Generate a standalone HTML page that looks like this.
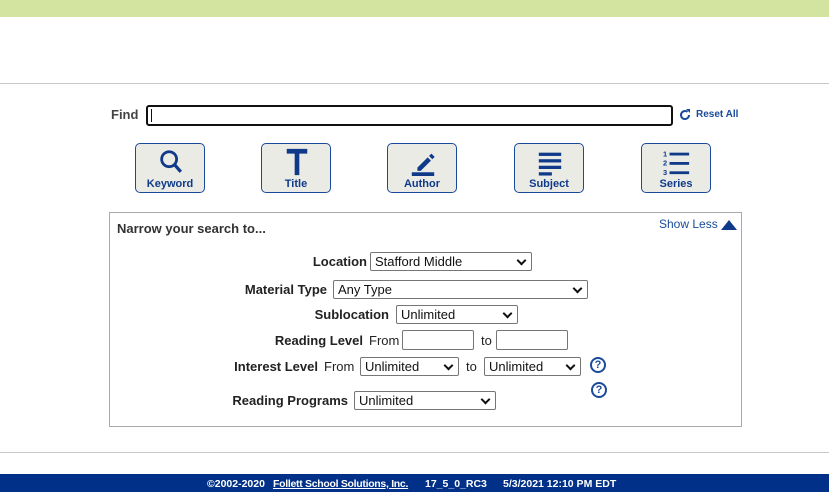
<!DOCTYPE html>
<html><head><meta charset="utf-8"><style>
*{margin:0;padding:0;box-sizing:border-box}
body{width:829px;height:497px;position:relative;background:#fff;font-family:"Liberation Sans",Arial,sans-serif;overflow:hidden;color:#222}
.a{position:absolute}
.btn{position:absolute;top:143px;width:70px;height:50px;background:#ebebe6;border:1px solid #1a4a9a;border-radius:5px;color:#0f3a8a;font-weight:bold;font-size:11px;text-align:center}
.btn span{position:absolute;left:0;right:0;top:34px;line-height:12px}
.btn svg{position:absolute;left:21px;top:4px}
.lab{position:absolute;font-size:13px;font-weight:bold;text-align:right;color:#222}
.sel{position:absolute;height:19px;border:1px solid #767676;border-radius:2px;background:#fff;font-size:13px;padding-left:4px;line-height:17px;color:#111}
.sel:after{content:"";position:absolute;right:6px;top:4px;width:5px;height:5px;border-right:2px solid #111;border-bottom:2px solid #111;transform:rotate(45deg)}
.inp{position:absolute;height:20px;border:1px solid #767676;border-radius:2px;background:#fff}
.t{position:absolute;font-size:13px;color:#222}
.q{position:absolute;width:16px;height:16px;border:2px solid #1a4a9a;border-radius:50%;color:#1a4a9a;font-size:11px;font-weight:bold;text-align:center;line-height:12px}
</style></head><body>
<div class="a" style="left:0;top:0;width:829px;height:17px;background:#d3e4a0"></div>
<div class="a" style="left:0;top:83px;width:829px;height:1px;background:#c8c8c8"></div>

<div class="a" style="left:111px;top:107px;font-size:13px;font-weight:bold;color:#444">Find</div>
<div class="a" style="left:146px;top:105px;width:527px;height:21px;border:2px solid #111;border-radius:3px"></div>
<div class="a" style="left:151px;top:109px;width:1px;height:13px;background:#111"></div>
<svg class="a" style="left:678px;top:108px" width="14" height="14" viewBox="0 0 14 14"><path d="M11 7a4 4 0 1 1-1.5-3.1" fill="none" stroke="#1a4a9a" stroke-width="2"/><path d="M8 1h4v4z" fill="#1a4a9a"/></svg>
<div class="a" style="left:696px;top:109px;font-size:10px;font-weight:bold;color:#1a4a9a">Reset All</div>

<div class="btn" style="left:135px"><svg width="28" height="28" viewBox="0 0 30 30"><circle cx="13" cy="12" r="8" fill="none" stroke="#0f3a8a" stroke-width="3"/><path d="M18.5 17.5l7 8" stroke="#0f3a8a" stroke-width="3.5"/></svg><span>Keyword</span></div>
<div class="btn" style="left:261px"><svg width="28" height="28" viewBox="0 0 30 30"><path d="M4 1h22v5H4zM12.5 1h5v28h-5z" fill="#0f3a8a"/></svg><span>Title</span></div>
<div class="btn" style="left:387px"><svg width="28" height="28" viewBox="0 0 30 30"><path d="M9 21l11-11 3.5 3.5-11 11H9z" fill="#0f3a8a"/><path d="M21.5 8.5l2.5-2.5 3.5 3.5-2.5 2.5z" fill="#0f3a8a"/><rect x="3" y="26" width="24" height="4" fill="#0f3a8a"/></svg><span>Author</span></div>
<div class="btn" style="left:514px"><svg width="28" height="28" viewBox="0 0 30 30"><rect x="3" y="5" width="24" height="3.5" fill="#0f3a8a"/><rect x="3" y="12" width="24" height="3.5" fill="#0f3a8a"/><rect x="3" y="19" width="24" height="3.5" fill="#0f3a8a"/><rect x="3" y="26" width="14" height="3.5" fill="#0f3a8a"/></svg><span>Subject</span></div>
<div class="btn" style="left:641px"><svg width="28" height="28" viewBox="0 0 30 30"><text x="0" y="9" font-size="8" font-weight="bold" fill="#0f3a8a" font-family="Liberation Sans">1</text><text x="0" y="19" font-size="8" font-weight="bold" fill="#0f3a8a" font-family="Liberation Sans">2</text><text x="0" y="29" font-size="8" font-weight="bold" fill="#0f3a8a" font-family="Liberation Sans">3</text><rect x="7" y="5" width="21" height="3" fill="#0f3a8a"/><rect x="7" y="15" width="21" height="3" fill="#0f3a8a"/><rect x="7" y="25" width="21" height="3" fill="#0f3a8a"/></svg><span>Series</span></div>

<div class="a" style="left:109px;top:212px;width:633px;height:215px;border:1px solid #aaa"></div>
<div class="a" style="left:117px;top:221px;font-size:13px;font-weight:bold;color:#333">Narrow your search to...</div>
<div class="a" style="left:659px;top:217px;font-size:12px;color:#1a4a9a">Show Less</div>
<svg class="a" style="left:721px;top:219px" width="16" height="11"><path d="M0 11L8 1l8 10z" fill="#0f3a8a"/></svg>

<div class="lab" style="right:462px;top:254px">Location</div>
<div class="sel" style="left:370px;top:252px;width:162px">Stafford Middle</div>
<div class="lab" style="right:502px;top:282px">Material Type</div>
<div class="sel" style="left:333px;top:280px;width:255px">Any Type</div>
<div class="lab" style="right:440px;top:307px">Sublocation</div>
<div class="sel" style="left:396px;top:305px;width:122px">Unlimited</div>
<div class="lab" style="right:466px;top:333px">Reading Level</div>
<div class="t" style="left:369px;top:333px">From</div>
<div class="inp" style="left:402px;top:330px;width:72px"></div>
<div class="t" style="left:481px;top:333px">to</div>
<div class="inp" style="left:496px;top:330px;width:72px"></div>
<div class="lab" style="right:511px;top:359px">Interest Level</div>
<div class="t" style="left:324px;top:359px">From</div>
<div class="sel" style="left:360px;top:357px;width:99px">Unlimited</div>
<div class="t" style="left:466px;top:359px">to</div>
<div class="sel" style="left:484px;top:357px;width:97px">Unlimited</div>
<div class="q" style="left:590px;top:357px">?</div>
<div class="q" style="left:591px;top:382px">?</div>
<div class="lab" style="right:481px;top:393px">Reading Programs</div>
<div class="sel" style="left:354px;top:391px;width:142px">Unlimited</div>

<div class="a" style="left:0;top:452px;width:829px;height:1px;background:#c8c8c8"></div>
<div class="a" style="left:0;top:474px;width:829px;height:18px;background:#003087;color:#fff;font-size:10.5px;font-weight:bold;line-height:20px">
<span class="a" style="left:207px">©2002-2020</span>
<span class="a" style="left:273px;text-decoration:underline;letter-spacing:-0.3px">Follett School Solutions, Inc.</span>
<span class="a" style="left:425px">17_5_0_RC3</span>
<span class="a" style="left:503px">5/3/2021 12:10 PM EDT</span>
</div>
</body></html>
